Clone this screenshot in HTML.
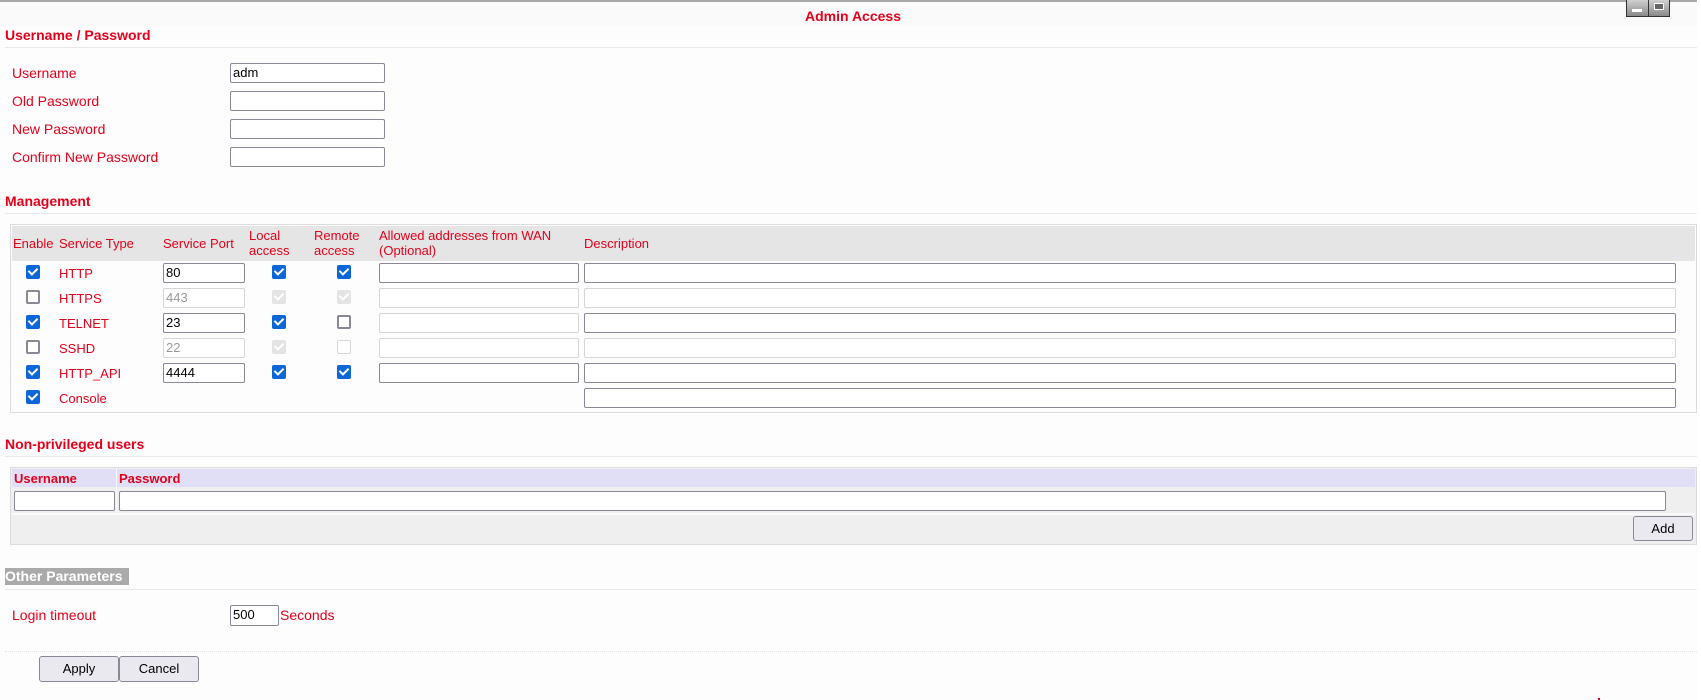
<!DOCTYPE html>
<html><head><meta charset="utf-8"><style>
body{margin:0;width:1701px;height:700px;background:#fdfdfd;font-family:"Liberation Sans",Arial,sans-serif;position:relative;overflow:hidden;color:#e3001b}
.a{position:absolute}
.h{position:absolute;left:5px;font-weight:bold;font-size:14px;color:#e3001b}
.ln{position:absolute;left:5px;width:1692px;height:1px;background:#e8e8e8}
.lb{position:absolute;left:12px;font-size:14px}
.in{position:absolute;box-sizing:border-box;border:1px solid #8a8796;border-radius:2px;background:#fff;font-size:13px;color:#000;padding:1px 2px;line-height:15px}
.dis{border-color:#d6d6d6;color:#999}
.cb{position:absolute;width:14px;height:14px;box-sizing:border-box;border-radius:2px}
.on{background:#0b67d8}
.on::after{content:"";position:absolute;left:4px;top:1px;width:4px;height:7px;border:solid #fff;border-width:0 2px 2px 0;transform:rotate(45deg)}
.off{border:2px solid #8a8796;background:#fff}
.offd{border:1px solid #d6d6d6;background:#fff}
.dch{background:#e4e4e4}
.dch::after{content:"";position:absolute;left:4px;top:1px;width:4px;height:7px;border:solid #fff;border-width:0 2px 2px 0;transform:rotate(45deg)}
.t{position:absolute;font-size:13px;line-height:15px}
.btn{position:absolute;box-sizing:border-box;border:1px solid #8a8796;border-radius:3px;background:#e9e9ef;color:#000;font-size:13px;text-align:center}
</style></head><body>
<div class="a" style="left:0;top:0;width:1701px;height:2px;background:#a9a9a9"></div>
<div class="a" style="left:0;top:2px;width:1697px;height:24px;background:#fafafa"></div>
<div class="a" style="left:1697px;top:0;width:4px;height:700px;background:#fff"></div>
<div class="a" style="left:0;top:8px;width:1701px;text-align:center;font-weight:bold;font-size:14px;padding-left:5px;box-sizing:border-box">Admin Access</div>
<div class="a" style="left:1626px;top:0;width:44px;height:17px;border:1px solid #333;border-top:0;box-sizing:border-box;background:linear-gradient(#d0d0d0,#8a8a8a)"></div>
<div class="a" style="left:1648px;top:0;width:1px;height:17px;background:#333"></div>
<div class="a" style="left:1632px;top:9px;width:10px;height:3px;background:#fff"></div>
<div class="a" style="left:1654px;top:3px;width:10px;height:7px;border:1px solid #fff;box-sizing:border-box;background:#666"></div>

<div class="h" style="top:27px">Username / Password</div>
<div class="ln" style="top:47px"></div>
<div class="lb" style="top:65px">Username</div>
<div class="lb" style="top:93px">Old Password</div>
<div class="lb" style="top:121px">New Password</div>
<div class="lb" style="top:149px">Confirm New Password</div>
<div class="in" style="left:230px;top:63px;width:155px;height:20px">adm</div>
<div class="in" style="left:230px;top:91px;width:155px;height:20px"></div>
<div class="in" style="left:230px;top:119px;width:155px;height:20px"></div>
<div class="in" style="left:230px;top:147px;width:155px;height:20px"></div>

<div class="h" style="top:193px">Management</div>
<div class="ln" style="top:213px"></div>
<div class="a" style="left:10px;top:224px;width:1687px;height:189px;border:1px solid #dcdcdc;box-sizing:border-box;background:#fdfdfd"></div>
<div class="a" style="left:12px;top:226px;width:1683px;height:35px;background:#e5e5e5"></div>
<div class="t" style="left:13px;top:236px">Enable</div>
<div class="t" style="left:59px;top:236px">Service Type</div>
<div class="t" style="left:163px;top:236px">Service Port</div>
<div class="t" style="left:249px;top:228px">Local<br>access</div>
<div class="t" style="left:314px;top:228px">Remote<br>access</div>
<div class="t" style="left:379px;top:228px">Allowed addresses from WAN<br>(Optional)</div>
<div class="t" style="left:584px;top:236px">Description</div>

<div class="cb on" style="left:26px;top:265px"></div><div class="t" style="left:59px;top:266px">HTTP</div>
<div class="in" style="left:163px;top:263px;width:82px;height:20px">80</div>
<div class="cb on" style="left:272px;top:265px"></div><div class="cb on" style="left:337px;top:265px"></div>
<div class="in" style="left:379px;top:263px;width:200px;height:20px"></div>
<div class="in" style="left:584px;top:263px;width:1092px;height:20px"></div>

<div class="cb off" style="left:26px;top:290px"></div><div class="t" style="left:59px;top:291px">HTTPS</div>
<div class="in dis" style="left:163px;top:288px;width:82px;height:20px">443</div>
<div class="cb dch" style="left:272px;top:290px"></div><div class="cb dch" style="left:337px;top:290px"></div>
<div class="in dis" style="left:379px;top:288px;width:200px;height:20px"></div>
<div class="in dis" style="left:584px;top:288px;width:1092px;height:20px"></div>

<div class="cb on" style="left:26px;top:315px"></div><div class="t" style="left:59px;top:316px">TELNET</div>
<div class="in" style="left:163px;top:313px;width:82px;height:20px">23</div>
<div class="cb on" style="left:272px;top:315px"></div><div class="cb off" style="left:337px;top:315px"></div>
<div class="in dis" style="left:379px;top:313px;width:200px;height:20px"></div>
<div class="in" style="left:584px;top:313px;width:1092px;height:20px"></div>

<div class="cb off" style="left:26px;top:340px"></div><div class="t" style="left:59px;top:341px">SSHD</div>
<div class="in dis" style="left:163px;top:338px;width:82px;height:20px">22</div>
<div class="cb dch" style="left:272px;top:340px"></div><div class="cb offd" style="left:337px;top:340px"></div>
<div class="in dis" style="left:379px;top:338px;width:200px;height:20px"></div>
<div class="in dis" style="left:584px;top:338px;width:1092px;height:20px"></div>

<div class="cb on" style="left:26px;top:365px"></div><div class="t" style="left:59px;top:366px">HTTP_API</div>
<div class="in" style="left:163px;top:363px;width:82px;height:20px">4444</div>
<div class="cb on" style="left:272px;top:365px"></div><div class="cb on" style="left:337px;top:365px"></div>
<div class="in" style="left:379px;top:363px;width:200px;height:20px"></div>
<div class="in" style="left:584px;top:363px;width:1092px;height:20px"></div>

<div class="cb on" style="left:26px;top:390px"></div><div class="t" style="left:59px;top:391px">Console</div>
<div class="in" style="left:584px;top:388px;width:1092px;height:20px"></div>

<div class="h" style="top:436px">Non-privileged users</div>
<div class="ln" style="top:456px"></div>
<div class="a" style="left:10px;top:467px;width:1687px;height:78px;border:1px solid #dcdcdc;box-sizing:border-box;background:#efefef"></div>
<div class="a" style="left:12px;top:469px;width:1683px;height:18px;background:#e1dff5"></div>
<div class="a" style="left:116px;top:469px;width:1px;height:45px;background:#fafafa"></div>
<div class="a" style="left:12px;top:513px;width:1683px;height:2px;background:#fafafa"></div>
<div class="t" style="left:14px;top:471px;font-weight:bold">Username</div>
<div class="t" style="left:119px;top:471px;font-weight:bold">Password</div>
<div class="in" style="left:14px;top:491px;width:101px;height:20px"></div>
<div class="in" style="left:119px;top:491px;width:1547px;height:20px"></div>
<div class="btn" style="left:1633px;top:516px;width:60px;height:25px;line-height:23px">Add</div>

<div class="a" style="left:5px;top:568px;width:124px;height:17px;background:#aaa;color:#fff;font-weight:bold;font-size:14px;line-height:17px">Other Parameters</div>
<div class="ln" style="top:589px"></div>
<div class="lb" style="top:607px">Login timeout</div>
<div class="in" style="left:230px;top:605px;width:49px;height:21px">500</div>
<div class="a" style="left:280px;top:607px;font-size:14px">Seconds</div>
<div class="a" style="left:5px;top:651px;width:1692px;height:0;border-top:1px dotted #e4e4e4"></div>
<div class="btn" style="left:39px;top:656px;width:80px;height:26px;line-height:24px">Apply</div>
<div class="btn" style="left:119px;top:656px;width:80px;height:26px;line-height:24px">Cancel</div>
<div class="a" style="left:1598px;top:698px;width:2px;height:2px;background:#e3001b"></div>
</body></html>
